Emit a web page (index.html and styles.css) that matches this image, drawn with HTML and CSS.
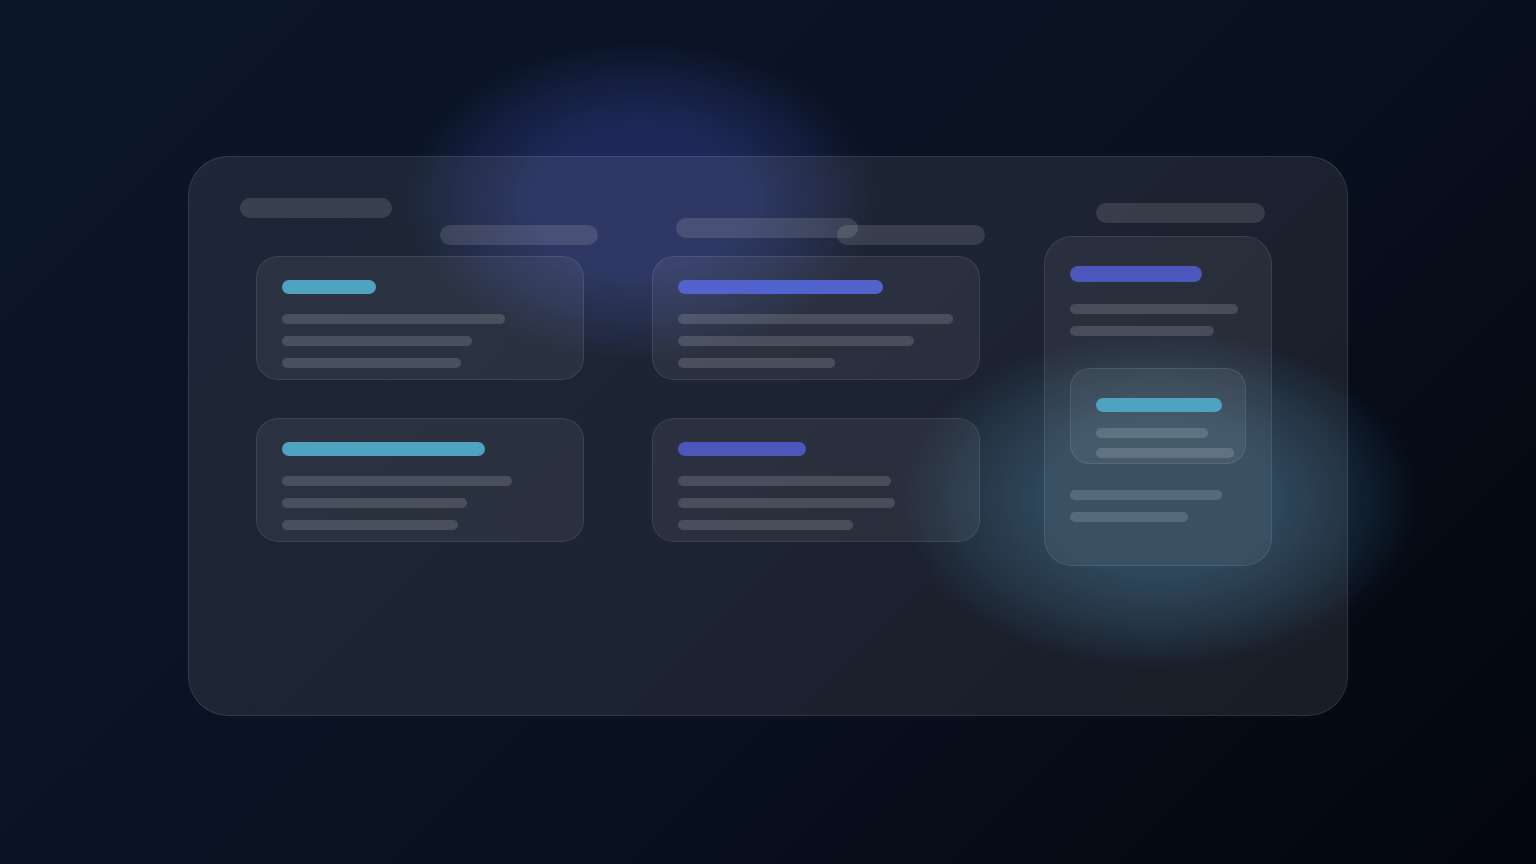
FILE: index.html
```html
<!DOCTYPE html>
<html lang="en">
<head>
<meta charset="utf-8">
<title>Board</title>
<link rel="stylesheet" href="styles.css">
</head>
<body>
<div class="panel">
  <div class="col col1">
    <div class="head">
      <div class="pill p1"></div>
      <div class="pill p2"></div>
    </div>
    <div class="cards">
      <div class="card">
        <div class="title cyan" style="width:94px"></div>
        <div class="line" style="width:223px"></div>
        <div class="line" style="width:190px"></div>
        <div class="line" style="width:179px"></div>
      </div>
      <div class="card">
        <div class="title cyan" style="width:203px"></div>
        <div class="line" style="width:230px"></div>
        <div class="line" style="width:185px"></div>
        <div class="line" style="width:176px"></div>
      </div>
    </div>
  </div>
  <div class="col col2">
    <div class="head">
      <div class="pill p3"></div>
      <div class="pill p4"></div>
    </div>
    <div class="cards">
      <div class="card">
        <div class="title indigo-b" style="width:205px"></div>
        <div class="line" style="width:275px"></div>
        <div class="line" style="width:236px"></div>
        <div class="line" style="width:157px"></div>
      </div>
      <div class="card">
        <div class="title indigo" style="width:128px"></div>
        <div class="line" style="width:213px"></div>
        <div class="line" style="width:217px"></div>
        <div class="line" style="width:175px"></div>
      </div>
    </div>
  </div>
  <div class="col col3">
    <div class="head">
      <div class="pill p5"></div>
    </div>
    <div class="tall">
      <div class="title big indigo" style="width:132px"></div>
      <div class="line first" style="width:168px"></div>
      <div class="line" style="width:144px"></div>
      <div class="inner">
        <div class="title cyan" style="width:126px"></div>
        <div class="line i1" style="width:112px"></div>
        <div class="line i2" style="width:138px"></div>
      </div>
      <div class="line after" style="width:152px"></div>
      <div class="line" style="width:118px"></div>
    </div>
  </div>
</div>
</body>
</html>
```

FILE: styles.css
```css
* { box-sizing: border-box; }
html, body { margin: 0; padding: 0; }
body {
  width: 1536px;
  height: 864px;
  overflow: hidden;
  font-family: "Inter", "Liberation Sans", sans-serif;
  background:
    radial-gradient(ellipse 235px 160px at 640px 200px, #1e2858 0%, #1e2858 45%, rgba(30,40,88,0.5) 75%, rgba(30,40,88,0) 100%),
    radial-gradient(ellipse 260px 170px at 1160px 500px, #1d384d 0%, #1d384d 45%, rgba(29,56,77,0.5) 75%, rgba(29,56,77,0) 100%),
    linear-gradient(135deg, #0b1628 0%, #0a1222 50%, #03060e 100%);
  padding-top: 156px;
  padding-left: 188px;
}
.panel {
  width: 1160px;
  height: 560px;
  border-radius: 40px;
  background: rgba(255,255,255,0.08);
  border: 1px solid rgba(255,255,255,0.1);
  padding: 41px 0 0 51px;
  display: flex;
  align-items: flex-start;
}
.col { display: flex; flex-direction: column; }
.col1 { width: 358px; }
.col2 { width: 333px; margin-left: 54px; }
.col3 { width: 228px; margin-left: 59px; }
.head { display: flex; align-items: flex-start; height: 47px; }
.col3 .head { height: 25px; }
.pill {
  height: 20px;
  border-radius: 10px;
  background: rgba(255,255,255,0.12);
  flex: none;
}
.p1 { width: 152px; }
.p2 { width: 158px; margin-left: 48px; margin-top: 27px; }
.p3 { width: 182px; margin-left: 24px; margin-top: 20px; }
.p4 { width: 148px; margin-left: -21px; margin-top: 27px; }
.p5 { width: 169px; margin-left: 52px; margin-top: 5px; }
.cards { display: flex; flex-direction: column; gap: 38px; margin-top: 11px; }
.col1 .cards { margin-left: 16px; }
.card {
  width: 328px;
  height: 124px;
  border-radius: 22px;
  background: rgba(255,255,255,0.06);
  border: 1px solid rgba(255,255,255,0.09);
  padding: 23px 25px;
}
.title { height: 14px; border-radius: 7px; }
.title.big { height: 16px; border-radius: 8px; }
.cyan { background: #4ea4c0; }
.indigo { background: #4b57ba; }
.indigo-b { background: #5363ce; }
.line {
  height: 10px;
  border-radius: 5px;
  background: rgba(255,255,255,0.15);
  margin-top: 12px;
}
.card .title + .line { margin-top: 20px; }
.tall {
  margin-top: 13px;
  width: 228px;
  height: 330px;
  border-radius: 28px;
  background: rgba(255,255,255,0.06);
  border: 1px solid rgba(255,255,255,0.09);
  padding: 29px 25px;
}
.tall .line.first { margin-top: 22px; }
.inner {
  margin-top: 32px;
  width: 176px;
  height: 96px;
  border-radius: 20px;
  background: rgba(255,255,255,0.06);
  border: 1px solid rgba(255,255,255,0.09);
  padding: 29px 25px;
}
.inner .line.i1 { margin-top: 16px; }
.inner .line.i2 { margin-top: 10px; }
.tall .line.after { margin-top: 26px; }
```
